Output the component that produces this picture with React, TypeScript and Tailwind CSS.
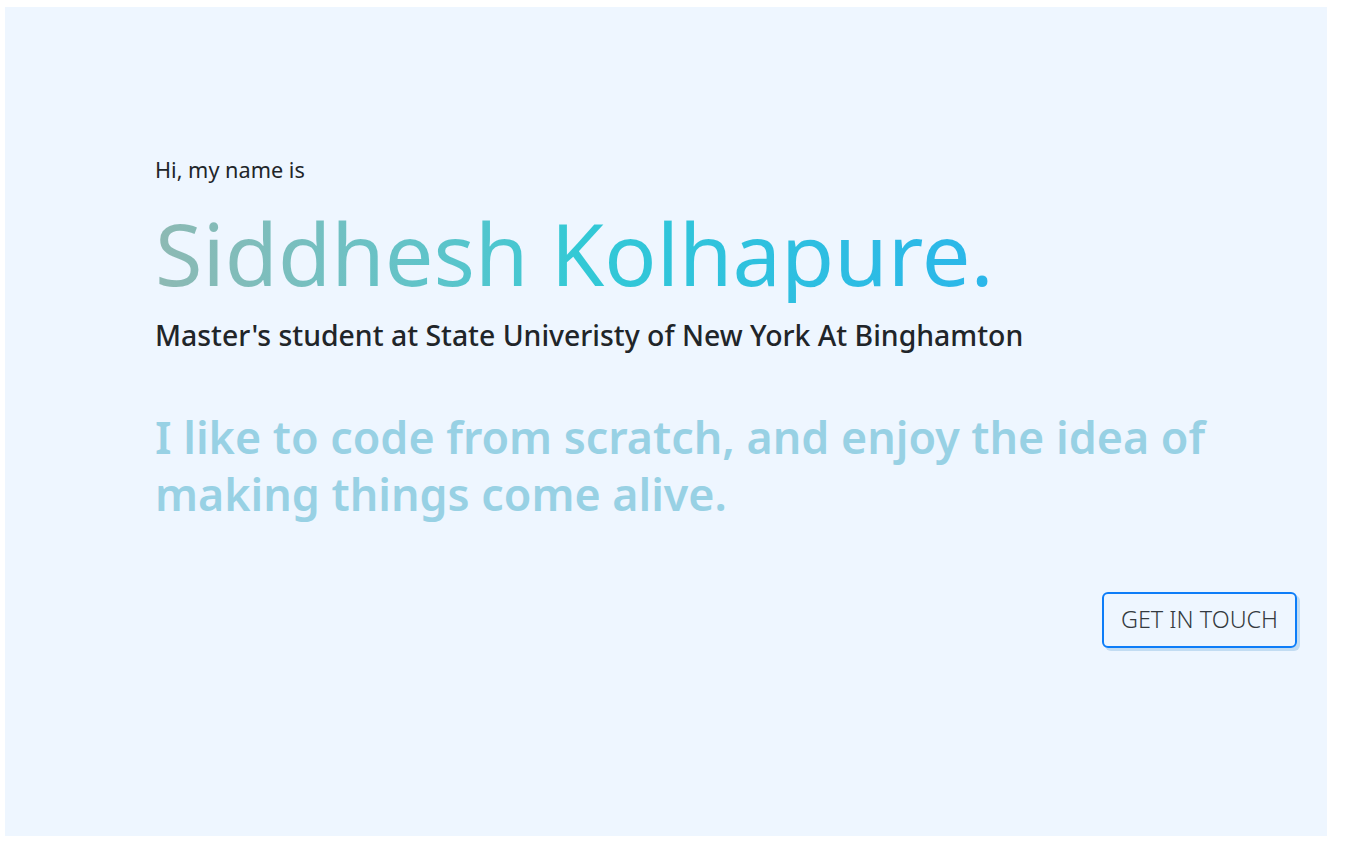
export default function App() {
  return (
    <div className="min-h-screen bg-white pl-[5px] pr-[20px] pt-[7px] pb-[16px]" style={{ fontFamily: '"Noto Sans", "Open Sans", sans-serif' }}>
      <section className="h-[829px] bg-[#eef6ff] pl-[150px] pr-[30px] pt-[148px]">
        <p className="text-[21.7px] leading-[30px] text-[#212529]">Hi, my name is</p>
        <h1 className="mt-[18px] inline-block bg-gradient-to-r from-[#8db9b3] via-[#33c9d5] to-[#2bb6ea] bg-clip-text text-[86.5px] font-normal leading-[100px] text-transparent">
          Siddhesh Kolhapure.
        </h1>
        <h3 className="mt-[15px] text-[28.4px] font-medium leading-[34px] text-[#212529]">
          Master's student at State Univeristy of New York At Binghamton
        </h3>
        <p className="mt-[56px] text-[44.8px] font-semibold leading-[57px] text-[#98d1e4]">
          I like to code from scratch, and enjoy the idea of making things come alive.
        </p>
        <div className="mt-[70px] flex justify-end">
          <button className="h-[56px] w-[195px] rounded-[6px] border-2 border-[#0d7df8] text-[23.4px] font-light text-[#343a40] shadow-[3px_3px_0_#c2dcf2]">
            GET IN TOUCH
          </button>
        </div>
      </section>
    </div>
  )
}
